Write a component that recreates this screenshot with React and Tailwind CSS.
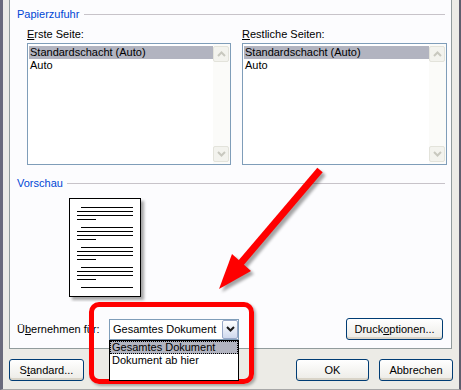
const Btn = ({ className, children }) => (
  <button className={"h-[22px] rounded-[3px] border border-[#003c74] bg-linear-to-b from-white to-[#ecebe6] shadow-[inset_0_-2px_0_#d9d4c8] text-[11px] leading-[13px] text-black " + className}>
    {children}
  </button>
);

const GroupHeader = ({ label, gap }) => (
  <div className="flex items-center h-[13px]">
    <span className="text-[#0046d5]">{label}</span>
    <div className={"flex-1 h-px bg-[#c7c3c9] " + gap} />
  </div>
);

const Chevron = ({ up, color }) => (
  <svg width="9" height="6" viewBox="0 0 9 6">
    <polyline
      points={up ? "1,5 4.5,1.5 8,5" : "1,1 4.5,4.5 8,1"}
      fill="none"
      stroke={color}
      strokeWidth="2"
    />
  </svg>
);

const ScrollBtn = ({ up }) => (
  <div className="w-[16px] h-[16px] rounded-[2px] border border-[#e3e3db] bg-[#f3f3ee] flex items-center justify-center">
    <Chevron up={up} color="#c8c8bf" />
  </div>
);

const ListBox = ({ width }) => (
  <div className={"h-[122px] border border-[#7f9db9] bg-white flex " + width}>
    <div className="flex-1 pt-[2px] pl-[1px]">
      <div className="bg-[#b2b4c0] pl-[1px] h-[13px]">Standardschacht (Auto)</div>
      <div className="pl-[1px] h-[13px]">Auto</div>
    </div>
    <div className="w-[17px] bg-[#fbfbf9] flex flex-col justify-between py-[2px]">
      <ScrollBtn up />
      <ScrollBtn />
    </div>
  </div>
);

const PagePreview = () => {
  const groups = [9, 29, 49, 69];
  return (
    <svg width="78" height="104" viewBox="0 0 78 104">
      <defs>
        <filter id="ps" x="-20%" y="-20%" width="140%" height="140%">
          <feGaussianBlur stdDeviation="1.5" />
        </filter>
      </defs>
      <rect x="3" y="3" width="72" height="99" fill="rgba(0,0,0,0.35)" filter="url(#ps)" />
      <rect x="0.5" y="0.5" width="71" height="98" fill="white" stroke="black" />
      {groups.map((g) => (
        <g key={g} fill="black">
          <rect x="12" y={g} width="52" height="1" />
          <rect x="8" y={g + 4} width="56" height="1" />
          <rect x="8" y={g + 8} width="56" height="1" />
          <rect x="8" y={g + 12} width="19" height="1" />
        </g>
      ))}
      <rect x="12" y="89" width="52" height="1" fill="black" />
    </svg>
  );
};

const Combo = () => (
  <div className="relative w-[130px] h-[21px] border border-[#7f9db9] bg-white flex">
    <span className="flex-1 pl-[3px] self-center">Gesamtes Dokument</span>
    <div className="w-[16px] rounded-[2px] border border-[#98a8c8] bg-linear-to-b from-white to-[#cfd9ee] flex items-center justify-center">
      <Chevron color="#1a1a1a" />
    </div>
    <div className="absolute left-[-1px] top-[20px] w-[130px] h-[41px] border border-black bg-white z-10 pt-[0px]">
      <div className="h-[13px] bg-[#b2b4c0] border border-dotted border-black leading-[11px] pl-[1px]">Gesamtes Dokument</div>
      <div className="h-[13px] pl-[2px]">Dokument ab hier</div>
    </div>
  </div>
);

export default function App() {
  return (
    <div className="relative w-[461px] h-[390px] overflow-hidden bg-[#ecebe6] border-l-[3px] border-l-[#6a6a7c] border-r-[2px] border-r-[#5e5e6e] border-b border-b-[#a8a8a8] pl-[6px] font-['Liberation_Sans',Arial,sans-serif] text-[11px] leading-[13px] text-black">
      <div className="w-[443px] h-[349px] bg-[#fcfcfe] border-l border-r border-b border-[#919b9c] pt-[8px] pl-[7px] pr-[6px] flex flex-col">
        <GroupHeader label="Papierzufuhr" gap="ml-[5px]" />
        <div className="mt-[7px] pl-[10px] flex gap-[11px]">
          <div className="flex flex-col">
            <span className="h-[13px]"><u>E</u>rste Seite:</span>
            <div className="mt-[2px]">
              <ListBox width="w-[204px]" />
            </div>
          </div>
          <div className="flex flex-col">
            <span className="h-[13px]"><u>R</u>estliche Seiten:</span>
            <div className="mt-[2px]">
              <ListBox width="w-[205px]" />
            </div>
          </div>
        </div>
        <div className="mt-[12px]">
          <GroupHeader label="Vorschau" gap="ml-[4px]" />
        </div>
        <div className="mt-[8px] pl-[52px]">
          <PagePreview />
        </div>
        <div className="mt-[16px] flex items-center h-[22px]">
          <span className="w-[92px] pt-[1px]">Ü<u>b</u>ernehmen für:</span>
          <Combo />
          <Btn className="ml-auto mr-[2px] w-[97px]">Druck<u>o</u>ptionen...</Btn>
        </div>
      </div>
      <div className="mt-[10px] w-[444px] flex">
        <Btn className="w-[75px]">S<u>t</u>andard...</Btn>
        <Btn className="ml-auto w-[73px]">OK</Btn>
        <Btn className="ml-[10px] w-[74px]">Abbrechen</Btn>
      </div>

      <div className="absolute left-[86px] top-[302px] w-[165px] h-[82px] border-[5px] border-[#ff0000] rounded-[10px] shadow-[2px_2px_3px_rgba(0,0,0,0.3)] pointer-events-none" />

      <svg className="absolute left-[-3px] top-0 pointer-events-none" width="461" height="390" viewBox="0 0 461 390">
        <defs>
          <filter id="as" x="-20%" y="-20%" width="140%" height="140%">
            <feGaussianBlur stdDeviation="1.8" />
          </filter>
        </defs>
        <g transform="translate(3,3)" filter="url(#as)" opacity="0.35">
          <line x1="320" y1="170" x2="240" y2="264" stroke="black" strokeWidth="7" />
          <polygon points="219,289 232,254 251,271" fill="black" />
        </g>
        <line x1="320" y1="170" x2="240" y2="264" stroke="#ff0000" strokeWidth="7" />
        <polygon points="219,289 232,254 251,271" fill="#ff0000" />
      </svg>
    </div>
  );
}
